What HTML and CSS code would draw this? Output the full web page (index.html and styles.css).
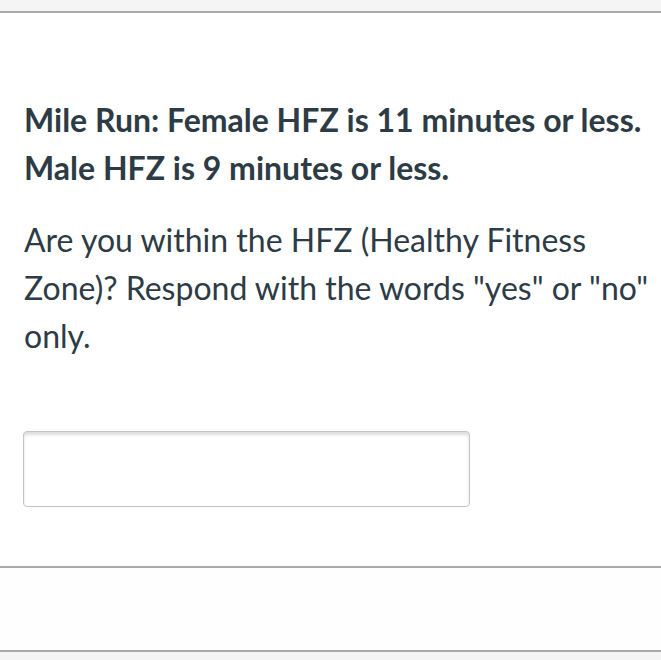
FILE: index.html
```html
<!DOCTYPE html>
<html>
<head>
<meta charset="utf-8">
<link rel="stylesheet" href="styles.css">
</head>
<body>
<div class="top-band"></div>
<main class="question">
  <p class="bold">Mile Run: Female HFZ is 11 minutes or less. Male HFZ is 9 minutes or less.</p>
  <p class="text">Are you within the HFZ (Healthy Fitness Zone)? Respond with the words "yes" or "no" only.</p>
  <div class="answer"><input class="answer-input" type="text"></div>
</main>
<div class="footer"></div>
<div class="bottom-band"></div>
</body>
</html>
```
FILE: styles.css
```css
html, body {
  margin: 0;
  padding: 0;
  background: #ffffff;
}
body {
  font-family: Lato, "Open Sans", sans-serif;
  color: #2d3b45;
  width: 661px;
  height: 660px;
  overflow: hidden;
}
.top-band {
  height: 11px;
  background: #f5f5f5;
  border-bottom: 2px solid #a9a9a9;
}
.question {
  height: 555px;
  box-sizing: border-box;
  padding: 83px 0 0 24px;
  border-bottom: 2px solid #a9a9a9;
}
.bold {
  margin: 0;
  font-weight: 700;
  font-size: 32px;
  line-height: 48px;
}
.text {
  margin: 24px 0 0;
  font-size: 32px;
  line-height: 48px;
}
.answer {
  margin-top: 71px;
}
.answer-input {
  display: block;
  width: 447px;
  height: 76px;
  box-sizing: border-box;
  margin-left: -1px;
  border: 1px solid #c4c4c4;
  border-radius: 4px;
  box-shadow: inset 0 3px 3px rgba(0,0,0,0.13);
  background: #fff;
}
.footer {
  height: 82px;
  background: #fefefe;
  border-bottom: 2px solid #a9a9a9;
}
.bottom-band {
  height: 8px;
  background: #f4f4f4;
}
```
